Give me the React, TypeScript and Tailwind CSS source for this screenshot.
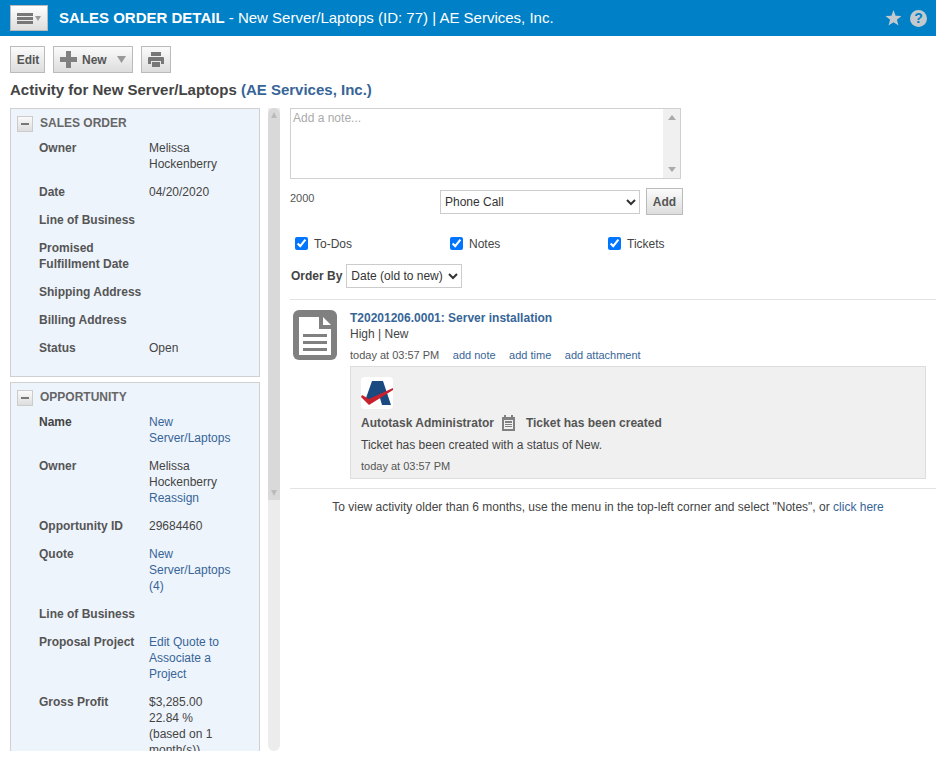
import type { ReactNode } from "react";

const link = "text-[#376597]";

function Row({ label, bold, children }: { label: ReactNode; bold?: boolean; children?: ReactNode }) {
  return (
    <div className="flex pb-3 leading-4">
      <div className={`w-[110px] shrink-0 pr-1 font-bold ${bold ? "text-[#444]" : "text-[#555]"}`}>{label}</div>
      <div className="w-[80px] text-[#444]">{children}</div>
    </div>
  );
}

function Section({ title, children }: { title: string; children: ReactNode }) {
  return (
    <div className="border border-[#d0d0d0] bg-[#eef4fc] pb-2">
      <div className="flex h-[28px] items-center pl-[6px] pt-[1px]">
        <div className="flex h-4 w-4 items-center justify-center border border-[#ccc] bg-gradient-to-b from-[#fafafa] to-[#ddd]">
          <div className="h-0.5 w-2 bg-[#777]" />
        </div>
        <span className="-mt-[2px] ml-[7px] text-[12px] font-bold text-[#666]">{title}</span>
      </div>
      <div className="pl-[28px] pt-[3px]">{children}</div>
    </div>
  );
}

function MenuIcon() {
  return (
    <div className="flex h-[26px] w-[38px] items-center justify-center gap-[2px] border border-[#bbb] bg-gradient-to-b from-[#fff] to-[#ddd]">
      <div className="flex flex-col gap-[1px]">
        <div className="h-[3px] w-4 bg-[#777]" />
        <div className="h-[3px] w-4 bg-[#777]" />
        <div className="h-[3px] w-4 bg-[#777]" />
      </div>
      <svg width="6" height="5" viewBox="0 0 6 5"><path d="M0 0h6L3 5z" fill="#999" /></svg>
    </div>
  );
}

function Btn({ children, cls }: { children: ReactNode; cls: string }) {
  return (
    <div className={`flex h-[27px] items-center border border-[#bbb] bg-gradient-to-b from-[#fbfbfb] to-[#ddd] font-bold text-[#555] ${cls}`}>
      {children}
    </div>
  );
}

function Check({ label, cls }: { label: string; cls: string }) {
  return (
    <label className={`flex items-center ${cls}`}>
      <input type="checkbox" defaultChecked className="m-0 h-[13px] w-[13px]" />
      <span className="ml-[6px] text-[#444]">{label}</span>
    </label>
  );
}

export default function App() {
  return (
    <div className="flex h-[761px] w-[936px] flex-col overflow-hidden bg-white font-['Liberation_Sans',Arial,sans-serif] text-[12px] text-[#444]">
      <header className="flex h-9 shrink-0 items-center bg-[#0080c6] pl-[10px] pr-[9px]">
        <MenuIcon />
        <div className="ml-[11px] text-[15px] text-white">
          <span className="font-bold">SALES ORDER DETAIL</span> - New Server/Laptops (ID: 77) | AE Services, Inc.
        </div>
        <div className="flex-1" />
        <svg width="17" height="16" viewBox="0 0 17 16">
          <path d="M8.500 0l2.100 5.700 5.900.3-4.600 3.700 1.600 5.800-5-3.300-5 3.300 1.600-5.800L.5 6l5.900-.3z" fill="#c4c9cd" />
        </svg>
        <div className="ml-[8px] flex h-[17px] w-[17px] items-center justify-center rounded-full bg-[#c4c9cd] text-[14px] font-bold text-[#0080c6]">?</div>
      </header>

      <div className="flex gap-2 pl-[10px] pt-[10px]">
        <Btn cls="w-[35px] justify-center pl-[1px]">Edit</Btn>
        <Btn cls="w-[80px] pl-[6px]">
          <svg width="17" height="17" viewBox="0 0 17 17"><path d="M6 0h5v6h6v5h-6v6H6v-6H0V6h6z" fill="#808080" /></svg>
          <span className="ml-[5px]">New</span>
          <svg className="ml-[10px]" width="9" height="7" viewBox="0 0 9 7"><path d="M0 0h9L4.500 7z" fill="#999" /></svg>
        </Btn>
        <Btn cls="w-[30px] justify-center">
          <svg width="16" height="15" viewBox="0 0 16 15"><path d="M3 0h10v4H3zM1 5h14a1 1 0 0 1 1 1v6h-3V9H3v3H0V6a1 1 0 0 1 1-1zM4 10h8v5H4z" fill="#777" /></svg>
        </Btn>
      </div>

      <div className="pl-[10px] pt-[9px] text-[15px] font-bold leading-4 text-[#444]">
        Activity for New Server/Laptops <span className={link}>(AE Services, Inc.)</span>
      </div>

      <div className="flex min-h-0 flex-1 pb-[10px] pl-[10px] pt-[10px]">
        <div className="flex w-[250px] shrink-0 flex-col gap-[5px] overflow-hidden">
          <Section title="SALES ORDER">
            <Row label="Owner">Melissa Hockenberry</Row>
            <Row label="Date">04/20/2020</Row>
            <Row label="Line of Business" />
            <Row label="Promised Fulfillment Date" />
            <Row label="Shipping Address" />
            <Row label="Billing Address" />
            <Row label="Status">Open</Row>
          </Section>
          <Section title="OPPORTUNITY">
            <Row label="Name" bold><span className={link}>New Server/Laptops</span></Row>
            <Row label="Owner">
              Melissa Hockenberry
              <div className={link}>Reassign</div>
            </Row>
            <Row label="Opportunity ID">29684460</Row>
            <Row label="Quote"><span className={link}>New Server/Laptops (4)</span></Row>
            <Row label="Line of Business" />
            <Row label="Proposal Project"><span className={link}>Edit Quote to Associate a Project</span></Row>
            <Row label="Gross Profit">
              $3,285.00
              <div>22.84 %</div>
              <div>(based on 1 month(s))</div>
            </Row>
          </Section>
        </div>

        <div className="ml-2 flex w-3 shrink-0 flex-col overflow-hidden rounded-b-md bg-[#ececec]">
          <div className="flex h-[392px] flex-col items-center justify-between rounded-t-md bg-[#d9d9d9] py-1">
            <svg width="6" height="6" viewBox="0 0 6 6"><path d="M3 0l3 6H0z" fill="#bbb" /></svg>
            <svg width="6" height="6" viewBox="0 0 6 6"><path d="M0 0h6L3 6z" fill="#bbb" /></svg>
          </div>
        </div>

        <div className="ml-[10px] min-w-0 flex-1">
          <div className="flex h-[71px] w-[391px] border border-[#d0d0d0]">
            <textarea
              placeholder="Add a note..."
              className="min-w-0 flex-1 resize-none px-[2px] pt-[1px] text-[12px] leading-4 outline-none placeholder:text-[#aaa]"
            />
            <div className="flex w-[17px] flex-col items-center justify-between bg-[#f0f0f0] py-[6px]">
              <svg width="8" height="5" viewBox="0 0 8 5"><path d="M4 0l4 5H0z" fill="#aaa" /></svg>
              <svg width="8" height="5" viewBox="0 0 8 5"><path d="M0 0h8L4 5z" fill="#aaa" /></svg>
            </div>
          </div>

          <div className="flex h-[37px] items-start">
            <div className="w-[150px] pt-3 text-[11px] leading-[14px] text-[#555]">2000</div>
            <select defaultValue="Phone Call" className="mt-[11px] h-6 w-[200px] border border-[#ccc] bg-white text-[12px] text-[#333]">
              <option>Phone Call</option>
            </select>
            <Btn cls="ml-[6px] mt-[9px] w-[37px] justify-center text-[12px]">Add</Btn>
          </div>

          <div className="mt-[18px] flex h-[18px] items-center pt-[1px]">
            <Check label="To-Dos" cls="ml-[5px] w-[155px]" />
            <Check label="Notes" cls="w-[158px]" />
            <Check label="Tickets" cls="" />
          </div>

          <div className="mt-[12px] flex items-center">
            <span className="ml-[1px] font-bold text-[#444]">Order By</span>
            <select defaultValue="Date (old to new)" className="ml-1 h-6 w-[116px] border border-[#ccc] bg-white text-[12px] text-[#333]">
              <option>Date (old to new)</option>
            </select>
          </div>

          <div className="mt-[11px] border-y border-[#e2e2e2] pb-[9px] pl-[3px] pr-[10px] pt-[10px]">
            <div className="flex">
              <svg width="44" height="50" viewBox="0 0 44 50" className="shrink-0">
                <rect width="44" height="50" rx="6" fill="#808080" />
                <path d="M6 7h20v12h12v26H6z" fill="#fff" />
                <path d="M30 7l8 8h-8z" fill="#fff" />
                <path d="M10 24h24v3H10zM10 31h24v3H10zM10 38h24v3H10z" fill="#808080" />
              </svg>
              <div className="ml-[13px] min-w-0 flex-1">
                <div className={`font-bold leading-4 ${link}`}>T20201206.0001: Server installation</div>
                <div className="leading-4 text-[#444]">High | New</div>
                <div className="mt-[6px] flex gap-[13.500px] text-[11px] leading-[14px]">
                  <span className="text-[#555]">today at 03:57 PM</span>
                  <span className={link}>add note</span>
                  <span className={link}>add time</span>
                  <span className={link}>add attachment</span>
                </div>
                <div className="mt-[4px] h-[113px] border border-[#ddd] bg-[#f0f0f0] pl-[10px] pt-[10px]">
                  <div className="h-8 w-8 overflow-hidden rounded bg-white">
                    <svg width="32" height="32" viewBox="0 0 32 32">
                      <path d="M11 4h11l8 24h-9l-2-7-9 4-5-4z" fill="#1a4a80" />
                      <path d="M1 18l7 4 24-11v2L8 28 0 20z" fill="#c8202c" />
                    </svg>
                  </div>
                  <div className="mt-[6px] flex h-4 items-center font-bold text-[#555]">
                    Autotask Administrator
                    <svg className="ml-[8px]" width="13" height="16" viewBox="0 0 13 16">
                      <path d="M0 2h2V0h2v2h5V0h2v2h2v14H0z" fill="#808080" />
                      <path d="M2 5h9v9H2z" fill="#f0f0f0" />
                      <path d="M3 6h7v2H3zM3 9h7v1H3zM3 11h7v1H3z" fill="#808080" />
                    </svg>
                    <span className="ml-[11px]">Ticket has been created</span>
                  </div>
                  <div className="mt-[6px] leading-4 text-[#444]">Ticket has been created with a status of New.</div>
                  <div className="mt-[6px] text-[11px] leading-[14px] text-[#555]">today at 03:57 PM</div>
                </div>
              </div>
            </div>
          </div>

          <div className="mt-[10px] pr-[10px] text-center leading-4 text-[#444]">
            To view activity older than 6 months, use the menu in the top-left corner and select "Notes", or <span className={link}>click here</span>
          </div>
        </div>
      </div>
    </div>
  );
}
